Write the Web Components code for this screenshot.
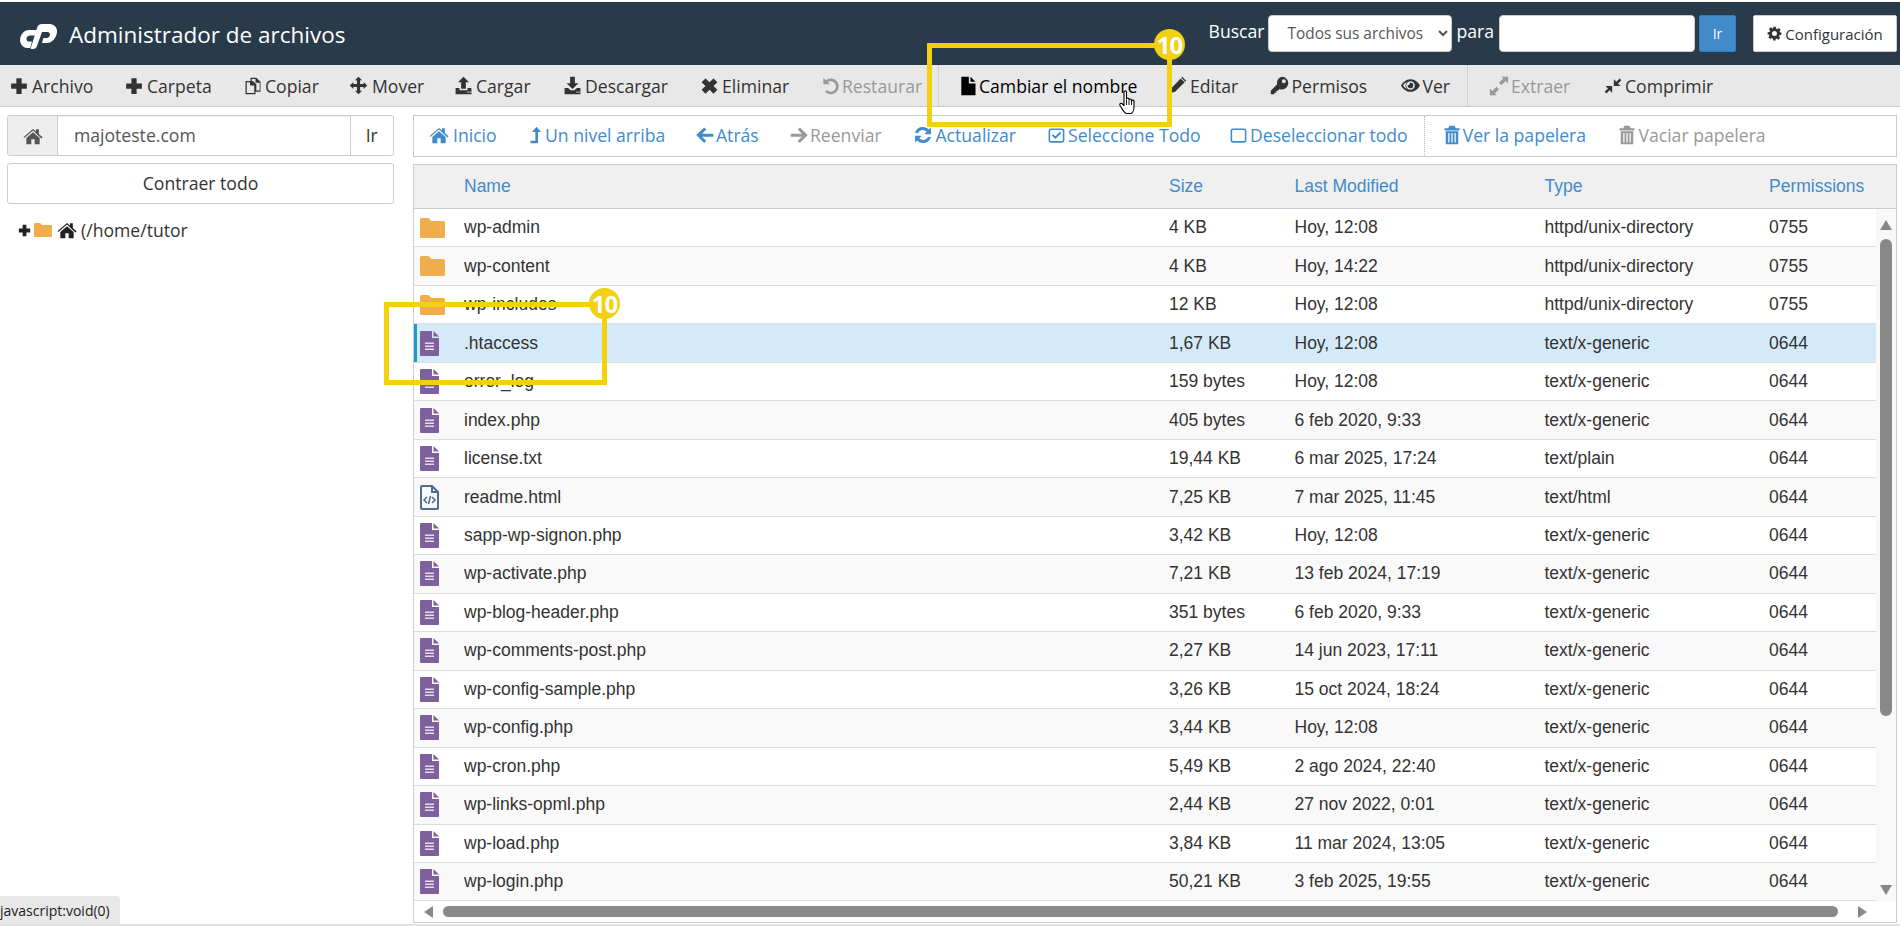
<!DOCTYPE html>
<html lang="es"><head><meta charset="utf-8"><title>Administrador de archivos</title>
<style>
html,body{margin:0;height:926px;overflow:hidden;background:#fff;font-family:"Open Sans",sans-serif;color:#333}
</style></head><body>
<fm-app></fm-app>
<script>
const P={
plus:'<path d="M8.500 1.500h7v7h7v7h-7v7h-7v-7h-7v-7h7z"/>',
copy:'<path fill-rule="evenodd" d="M9 2h7l5 5v12h-6v3H3V6h6zm1.500 1.500v2.500h1.500l4 4v7.500h4V8h-5V3.500zM4.500 7.500v13h9V11.500h-5v-4z"/>',
move:'<path d="M12 1l4.500 4.500H14V10h4.500V7.500L23 12l-4.500 4.500V14H14v4.500h2.500L12 23l-4.500-4.500H10V14H5.500v2.500L1 12l4.500-4.500V10H10V5.500H7.500z"/>',
upload:'<path fill-rule="evenodd" d="M12 1l7 7h-4v8H9V8H5zM2 15h5v3h10v-3h5v8H2zm15 4.500v1.500h1.500v-1.500zm2.500 0v1.500H21v-1.500z"/>',
download:'<path fill-rule="evenodd" d="M9 1h6v8h4.500L12 16.500 4.500 9H9zM2 15h4.500l3 3h5l3-3H22v8H2zm15 4.500v1.500h1.500v-1.500zm2.500 0v1.500H21v-1.500z"/>',
times:'<path d="M7 3l5 5 5-5 5 5-5 4.500 5 5-5 5-5-5-5 5-5-5 5-5-5-4.500z"/>',
undo:'<path d="M4 2l3 3a9.500 9.500 0 1 1-1 14l2.200-2.300A6.300 6.300 0 1 0 9.300 7.300L12 10H4z"/>',
file:'<path d="M4 1h9v8h8v14H4zM15 1l6 6h-6z"/>',
pencil:'<path d="M16 3l5 5L9 20l-6 1.500L4.500 15zM18 1l5 5-1.200 1.200-5-5z"/>',
key:'<path fill-rule="evenodd" d="M15 1a8 8 0 1 1-3 15.400L10 18.500H8v2.500H5.500V23H1v-4.500l8-8A8 8 0 0 1 15 1zm2.500 3a2.500 2.500 0 1 0 0 5 2.500 2.500 0 0 0 0-5z"/>',
eye:'<path fill-rule="evenodd" d="M12 4c6 0 10 4.500 12 8-2 3.500-6 8-12 8S2 15.500 0 12c2-3.500 6-8 12-8zM12 6.500a5.500 5.500 0 1 0 0 11 5.500 5.500 0 0 0 0-11zM2.500 12c1.400 2 3 3.500 5 4.600a6.800 6.800 0 0 1 0-9.200c-2 1.100-3.600 2.600-5 4.600zm9.500-3.500a3.500 3.500 0 1 1-3.300 2.400c.9 1 2.700.2 2.200-2.200.3-.1.700-.2 1.100-.2z"/>',
expand:'<path d="M15 1h8v8l-3-3-5 5-3-3 5-5zM9 23H1v-8l3 3 5-5 3 3-5 5z"/>',
compress:'<path d="M22 5l-4 4 3 3h-8V4l3 3 4-4zM2 19l4-4-3-3h8v8l-3-3-4 4z"/>',
home:'<path d="M12 3.500l3.500 3V4H19v5.500l4.500 3.900-1.500 1.700L12 5.500 2 14.100.5 13.400zM12 7.500l8 7V22h-6v-6h-4v6H4v-7.500z"/>',
levelup:'<path d="M14 1l6 7h-4v13a2 2 0 0 1-2 2H6v-3.500h6.500V8H8z"/>',
left:'<path d="M11 3l2.500 2.500L8.500 10.500H22V14H8.500l5 5L11 21.500 1.500 12z"/>',
right:'<path d="M13 3l-2.500 2.500 5 5H2V14h13.500l-5 5 2.500 2.500L22.500 12z"/>',
refresh:'<path d="M12 2.500c2.800 0 5.300 1.200 7 3l2.500-2.500v8h-8l3-3A6.500 6.500 0 0 0 6 9.500H2.500A9.700 9.700 0 0 1 12 2.500zM2.500 13h8l-3 3A6.500 6.500 0 0 0 18 14.500h3.500A9.700 9.700 0 0 1 5 18.500L2.500 21z"/>',
check:'<path fill-rule="evenodd" d="M5 3h14a3 3 0 0 1 3 3v12a3 3 0 0 1-3 3H5a3 3 0 0 1-3-3V6a3 3 0 0 1 3-3zm0 2a1 1 0 0 0-1 1v12a1 1 0 0 0 1 1h14a1 1 0 0 0 1-1V6a1 1 0 0 0-1-1zM10.500 16.500L6 12l1.700-1.700 2.800 2.800 5.800-5.800L18 9z"/>',
square:'<path fill-rule="evenodd" d="M5 3h14a3 3 0 0 1 3 3v12a3 3 0 0 1-3 3H5a3 3 0 0 1-3-3V6a3 3 0 0 1 3-3zm0 2a1 1 0 0 0-1 1v12a1 1 0 0 0 1 1h14a1 1 0 0 0 1-1V6a1 1 0 0 0-1-1z"/>',
trash:'<path fill-rule="evenodd" d="M9 1h6l1.500 3H21v2.500H3V4h4.500zM4.500 7.500h15V23h-15zM7.500 9.500v11.500h1.500V9.500zm3.800 0v11.500h1.500V9.500zm3.700 0v11.500h1.500V9.500z"/>',
gear:'<path fill-rule="evenodd" d="M10 1h4l.6 3.200 1.800.8 2.700-1.800 2.800 2.800-1.800 2.700.8 1.800L23 10v4l-3.100.6-.8 1.800 1.800 2.700-2.800 2.800-2.700-1.800-1.800.8L14 23h-4l-.6-3.100-1.800-.8-2.700 1.800-2.800-2.800 1.800-2.700-.8-1.800L1 14v-4l3.100-.6.8-1.800-1.800-2.700 2.800-2.800 2.700 1.800 1.800-.8zm2 7a4 4 0 1 0 0 8 4 4 0 0 0 0-8z"/>'
};
class FmIcon extends HTMLElement{
  connectedCallback(){
    if(this.shadowRoot)return;
    const s=this.getAttribute('size')||18;
    this.attachShadow({mode:'open'}).innerHTML=`<style>:host{display:inline-flex;flex:none;width:${s}px;height:${s}px}svg{width:100%;height:100%;fill:currentColor;display:block}</style><svg viewBox="0 0 24 24">${P[this.getAttribute('name')]||''}</svg>`;
  }
}
customElements.define('fm-icon',FmIcon);

class FmHeader extends HTMLElement{
  constructor(){super();this.attachShadow({mode:'open'}).innerHTML=`<style>
  :host{display:flex;align-items:center;height:63px;margin-top:2px;background:#293a4a;color:#fff;flex:none;box-sizing:border-box;padding:0 3px 0 20px;font-family:"Open Sans",sans-serif}
  svg{width:37px;height:25px;fill:#fff;display:block;flex:none;margin-top:6px}
  h1{margin:0 0 0 12px;padding-top:4px;font-size:22.500px;font-weight:400;line-height:1;flex:1}
  .lbl{font-size:17.600px;line-height:1;margin-top:-4px}
  select{width:184px;height:37px;margin:0 4px 0 4px;border:1px solid #ccc;border-radius:4px;background:#fff;color:#555;font:15.400px "Open Sans",sans-serif;padding:0 0 0 14px}
  .q{width:196px;height:37px;box-sizing:border-box;border:1px solid #ccc;border-radius:4px;background:#fff;margin-left:5px}
  .ir{width:37px;height:37px;box-sizing:border-box;margin-left:4px;background:#428bca;border:1px solid #357ebd;border-radius:2px;color:#fff;font-size:14px;display:flex;align-items:center;justify-content:center}
  .cfg{width:144px;height:37px;box-sizing:border-box;margin-left:17px;background:#fff;border:1px solid #ccc;border-radius:2px;color:#333;font-size:15px;display:flex;align-items:center;justify-content:center;gap:3px}
  </style>
  <svg viewBox="0 0 37 25"><path d="M9 6h8l-1.500 5.500H10c-1.500 0-3 1-3.400 2.700-.4 1.600.6 3.300 2.400 3.300h3L10.300 24H8C2.500 24-1 19 .4 13.500 1.500 9 5 6 9 6z"/><path d="M22 0h7c5 0 8.500 3.500 8 8-.6 6-5 11-10 11h-5l1.300-5h3c2 0 3.700-1.500 3.700-3.500 0-1.500-1-2.500-2.500-2.500h-5.500L17 22c-.5 2-2 3-4 3h-2.500L17 4c.7-2.500 2.500-4 5-4z"/></svg>
  <h1>Administrador de archivos</h1>
  <span class="lbl">Buscar</span>
  <select aria-label="Buscar"><option>Todos sus archivos</option></select>
  <span class="lbl">para</span>
  <div class="q"></div><div class="ir">Ir</div>
  <div class="cfg"><fm-icon name="gear" size="15"></fm-icon>Configuración</div>`;}
}
customElements.define('fm-header',FmHeader);

class ToolBtn extends HTMLElement{
  connectedCallback(){
    if(this.shadowRoot)return;
    const w=this.getAttribute('w'),s=this.getAttribute('sz')||20;
    this.attachShadow({mode:'open'}).innerHTML=`<style>
    :host{display:inline-flex;align-items:center;flex:none;width:${w}px;height:100%;white-space:nowrap;font-size:17.600px;color:var(--tc,#333);box-sizing:border-box;padding-bottom:var(--pb,0)}
    :host([off]){color:#999}
    fm-icon{margin-right:${this.getAttribute('ig')||2}px}
    </style><fm-icon name="${this.getAttribute('icon')}" size="${s}"></fm-icon><slot></slot>`;
  }
}
customElements.define('tool-btn',ToolBtn);

class FmToolbar extends HTMLElement{
  constructor(){super();this.attachShadow({mode:'open'}).innerHTML=`<style>
  :host{display:flex;align-items:center;height:42px;box-sizing:border-box;flex:none;background:#e8e8e8;border-bottom:1px solid #ccc;padding-left:10px;--tc:#333}
  .sep{flex:none;align-self:stretch;width:0;border-left:1px dotted #bbb}
  tool-btn[black]{color:#000}
  </style>
  <tool-btn w="115" icon="plus" sz="18" ig="4">Archivo</tool-btn>
  <tool-btn w="118" icon="plus" sz="18" ig="4">Carpeta</tool-btn>
  <tool-btn w="106" icon="copy">Copiar</tool-btn>
  <tool-btn w="105" icon="move" sz="19" ig="4">Mover</tool-btn>
  <tool-btn w="109" icon="upload" sz="19" ig="3">Cargar</tool-btn>
  <tool-btn w="137" icon="download" sz="19" ig="3">Descargar</tool-btn>
  <tool-btn w="120" icon="times" sz="19" ig="3">Eliminar</tool-btn>
  <tool-btn w="118" icon="undo" off>Restaurar</tool-btn>
  <span class="sep"></span>
  <tool-btn w="210" icon="file" ig="1" black style="margin-left:19px">Cambiar el nombre</tool-btn>
  <tool-btn w="101.500" icon="pencil" sz="19" ig="3">Editar</tool-btn>
  <tool-btn w="131" icon="key" sz="19" ig="3">Permisos</tool-btn>
  <tool-btn w="66.500" icon="eye" sz="19" ig="3">Ver</tool-btn>
  <span class="sep"></span>
  <tool-btn w="114" icon="expand" off style="margin-left:21px">Extraer</tool-btn>
  <tool-btn w="140" icon="compress">Comprimir</tool-btn>`;}
}
customElements.define('fm-toolbar',FmToolbar);

class FmSidebar extends HTMLElement{
  constructor(){super();this.attachShadow({mode:'open'}).innerHTML=`<style>
  :host{display:flex;flex-direction:column;width:387px;flex:none;margin:8px 19px 0 7px;font-size:17.600px;color:#333}
  .grp{display:flex;height:41px;box-sizing:border-box;border:1px solid #ccc;border-radius:3px;overflow:hidden}
  .add{width:49px;background:#eee;border-right:1px solid #ccc;display:flex;align-items:center;justify-content:center;color:#555}
  .inp{flex:1;display:flex;align-items:center;padding:0 0 2px 16px;color:#555;box-shadow:inset 0 1px 1px rgba(0,0,0,.075)}
  .go{width:42.500px;border-left:1px solid #ccc;display:flex;align-items:center;justify-content:center;padding-bottom:2px}
  .btn{height:41px;box-sizing:border-box;margin-top:7px;padding-bottom:2px;border:1px solid #ccc;border-radius:3px;display:flex;align-items:center;justify-content:center}
  .tree{display:flex;align-items:center;height:24px;margin-top:14px;padding-left:11px}
  .fold{width:18px;height:14px;margin:0 5px 0 4px;flex:none;fill:#f0ad4e}
  </style>
  <div class="grp"><span class="add"><fm-icon name="home" size="20"></fm-icon></span><span class="inp">majoteste.com</span><span class="go">Ir</span></div>
  <div class="btn">Contraer todo</div>
  <div class="tree"><fm-icon name="plus" size="13" style="color:#222"></fm-icon><svg class="fold" viewBox="0 0 18 14" style="margin-left:3px"><path d="M1 0h5l2 2h9a1 1 0 0 1 1 1v10a1 1 0 0 1-1 1H1a1 1 0 0 1-1-1V1a1 1 0 0 1 1-1z"/></svg><fm-icon name="home" size="20" style="color:#222;margin-right:4px"></fm-icon><span>(/home/tutor</span></div>`;}
}
customElements.define('fm-sidebar',FmSidebar);

class FmNav extends HTMLElement{
  constructor(){super();this.attachShadow({mode:'open'}).innerHTML=`<style>
  :host{display:flex;align-items:center;height:42px;box-sizing:border-box;flex:none;border:1px solid #ccc;padding-left:15px;--tc:#428bca;--pb:2px}
  .sep{flex:none;align-self:stretch;width:0;border-left:1px dotted #bbb}
  </style>
  <tool-btn w="96.500" sz="20" icon="home" ig="4">Inicio</tool-btn>
  <tool-btn w="169.500" sz="18" icon="levelup" ig="1.500">Un nivel arriba</tool-btn>
  <tool-btn w="94" sz="20" icon="left" ig="1">Atrás</tool-btn>
  <tool-btn w="123.500" sz="20" icon="right" ig="1" off>Reenviar</tool-btn>
  <tool-btn w="134.500" sz="20" icon="refresh" ig="3">Actualizar</tool-btn>
  <tool-btn w="182" sz="19" icon="check" ig="2">Seleccione Todo</tool-btn>
  <tool-btn w="194.700" sz="19" icon="square" ig="2">Deseleccionar todo</tool-btn>
  <span class="sep"></span>
  <tool-btn w="175.800" sz="20" icon="trash" ig="1" style="margin-left:17px">Ver la papelera</tool-btn>
  <tool-btn w="170" sz="20" icon="trash" ig="1" off>Vaciar papelera</tool-btn>`;}
}
customElements.define('fm-nav',FmNav);

const COLS='grid-template-columns:6px 44px 705px 125.500px 250px 224.500px 1fr';
class FileRow extends HTMLElement{
  connectedCallback(){
    if(this.shadowRoot)return;
    const a=n=>this.getAttribute(n)||'';
    const k=a('kind');
    const ic=k==='dir'?`<svg width="25" height="20" viewBox="0 0 25 20"><path fill="#f0ad4e" d="M1.500 0h7l3 3h12A1.500 1.500 0 0 1 25 4.500v14a1.500 1.500 0 0 1-1.500 1.500h-22A1.500 1.500 0 0 1 0 18.500v-17A1.500 1.500 0 0 1 1.500 0z"/></svg>`
    :k==='code'?`<svg width="19" height="25" viewBox="0 0 19 25"><path fill="none" stroke="#4f6d8f" stroke-width="2" d="M2 1h10l6 6v16a1 1 0 0 1-1 1H2a1 1 0 0 1-1-1V2a1 1 0 0 1 1-1zM12 1v6h6"/><path fill="none" stroke="#4f6d8f" stroke-width="1.500" d="M7 12l-3 3 3 3M12 12l3 3-3 3M10.500 11l-2 8"/></svg>`
    :`<svg width="19" height="25" viewBox="0 0 19 25"><path fill="#7d609c" d="M1 0h11v7h7v17a1 1 0 0 1-1 1H1a1 1 0 0 1-1-1V1a1 1 0 0 1 1-1zM13.500 0L19 5.500h-5.500z"/><path fill="#e4dcec" d="M5 11.500h9V13H5zM5 14.500h9V16H5zM5 17.500h9V19H5z"/></svg>`;
    this.attachShadow({mode:'open'}).innerHTML=`<style>
    :host{display:grid;${COLS};align-items:center;height:38.470px;box-sizing:border-box;border-bottom:1px solid #ddd;font:17.500px "Liberation Sans",Arial,sans-serif;color:#333;background:#fff;white-space:nowrap;position:relative}
    :host(:nth-child(even)){background:#f9f9f9}
    :host([sel]){background:#d5eaf8}
    :host([sel])::before{content:"";position:absolute;left:0;top:0;bottom:0;width:3px;background:#1b9ad6}
    svg{display:block}
    .ic{grid-column:2}
    </style><span class="ic">${ic}</span><span>${a('n')}</span><span>${a('s')}</span><span>${a('m')}</span><span>${a('t')}</span><span>${a('p')}</span>`;
  }
}
customElements.define('file-row',FileRow);

const ROWS=[
['dir','wp-admin','4 KB','Hoy, 12:08','httpd/unix-directory','0755'],
['dir','wp-content','4 KB','Hoy, 14:22','httpd/unix-directory','0755'],
['dir','wp-includes','12 KB','Hoy, 12:08','httpd/unix-directory','0755'],
['txt','.htaccess','1,67 KB','Hoy, 12:08','text/x-generic','0644',1],
['txt','error_log','159 bytes','Hoy, 12:08','text/x-generic','0644'],
['txt','index.php','405 bytes','6 feb 2020, 9:33','text/x-generic','0644'],
['txt','license.txt','19,44 KB','6 mar 2025, 17:24','text/plain','0644'],
['code','readme.html','7,25 KB','7 mar 2025, 11:45','text/html','0644'],
['txt','sapp-wp-signon.php','3,42 KB','Hoy, 12:08','text/x-generic','0644'],
['txt','wp-activate.php','7,21 KB','13 feb 2024, 17:19','text/x-generic','0644'],
['txt','wp-blog-header.php','351 bytes','6 feb 2020, 9:33','text/x-generic','0644'],
['txt','wp-comments-post.php','2,27 KB','14 jun 2023, 17:11','text/x-generic','0644'],
['txt','wp-config-sample.php','3,26 KB','15 oct 2024, 18:24','text/x-generic','0644'],
['txt','wp-config.php','3,44 KB','Hoy, 12:08','text/x-generic','0644'],
['txt','wp-cron.php','5,49 KB','2 ago 2024, 22:40','text/x-generic','0644'],
['txt','wp-links-opml.php','2,44 KB','27 nov 2022, 0:01','text/x-generic','0644'],
['txt','wp-load.php','3,84 KB','11 mar 2024, 13:05','text/x-generic','0644'],
['txt','wp-login.php','50,21 KB','3 feb 2025, 19:55','text/x-generic','0644']];
class FileTable extends HTMLElement{
  constructor(){super();this.attachShadow({mode:'open'}).innerHTML=`<style>
  :host{display:flex;flex-direction:column;flex:1;min-height:0;box-sizing:border-box;border:1px solid #ccc;font:17.500px "Liberation Sans",Arial,sans-serif;position:relative}
  .hd{display:grid;${COLS};align-items:center;height:44px;flex:none;box-sizing:border-box;background:#f0f0f0;border-bottom:1px solid #ccc;color:#428bca}
  .hd span:first-child{grid-column:3}
  .body{display:flex;flex:1;min-height:0}
  .rows{flex:1;min-width:0;overflow:hidden}
  .vs{width:20px;flex:none;background:#f8f8f8;display:flex;flex-direction:column;align-items:center;padding:11px 0 0}
  .up{width:0;height:0;border:6.500px solid transparent;border-top:0;border-bottom:10px solid #888}
  .dn{width:0;height:0;border:6.500px solid transparent;border-bottom:0;border-top:10px solid #888;margin-top:auto;margin-bottom:27px}
  .th{width:11.500px;height:477px;background:#888;border-radius:6px;margin-top:9px}
  .hs{position:absolute;left:0;right:0;bottom:0;height:21px;display:flex;align-items:center;background:#fff}
  .hs i{display:block;width:0;height:0;border:6.500px solid transparent}
  .l{border-left:0!important;border-right:9px solid #888!important;margin-left:10px}
  .r{border-right:0!important;border-left:9px solid #888!important;margin-left:20px}
  .ht{height:11px;border-radius:6px;background:#888;margin-left:10px;width:1395px}
  </style>
  <div class="hd"><span>Name</span><span>Size</span><span>Last Modified</span><span>Type</span><span>Permissions</span></div>
  <div class="body"><div class="rows">${ROWS.map(r=>`<file-row kind="${r[0]}" n="${r[1]}" s="${r[2]}" m="${r[3]}" t="${r[4]}" p="${r[5]}"${r[6]?' sel':''}></file-row>`).join('')}</div>
  <div class="vs"><div class="up"></div><div class="th"></div><div class="dn"></div></div></div>
  <div class="hs"><i class="l"></i><div class="ht"></div><i class="r"></i></div>`;}
}
customElements.define('file-table',FileTable);

class FmCallout extends HTMLElement{
  connectedCallback(){
    if(this.shadowRoot)return;
    const g=n=>this.getAttribute(n);
    this.attachShadow({mode:'open'}).innerHTML=`<style>
    :host{position:absolute;left:${g('x')}px;top:${g('y')}px;width:${g('w')}px;height:${g('h')}px;box-sizing:border-box;border:5px solid #f3d010;z-index:5;display:block}
    b{position:absolute;right:-18px;top:-19px;width:31px;height:31px;border-radius:50%;background:#f3d010;color:#fff;font:700 24px/31px "Open Sans",sans-serif;letter-spacing:-1px;text-align:center}
    </style><b>10</b>`;
  }
}
customElements.define('fm-callout',FmCallout);

class FmApp extends HTMLElement{
  constructor(){super();this.attachShadow({mode:'open'}).innerHTML=`<style>
  :host{display:flex;flex-direction:column;height:926px;position:relative;background:#fff;font-family:"Open Sans",sans-serif}
  .main{display:flex;flex:1;min-height:0}
  .right{flex:1;min-width:0;display:flex;flex-direction:column;gap:7px;margin:8px 3px 0 0}
  .foot{height:3px;flex:none;background:linear-gradient(#fff 1px,#e2e2e2 1px)}
  .status{position:absolute;left:0;top:896px;width:120px;height:28px;box-sizing:border-box;background:#e8e8e8;border-top-right-radius:4px;font:14px "Open Sans",sans-serif;color:#222;display:flex;align-items:center;z-index:6}
  .hand{position:absolute;left:1118px;top:90px;z-index:7;width:20px;height:25px}
  </style>
  <fm-header></fm-header><fm-toolbar></fm-toolbar>
  <div class="main"><fm-sidebar></fm-sidebar><div class="right"><fm-nav></fm-nav><file-table></file-table></div></div>
  <div class="foot"></div>
  <fm-callout x="927" y="43" w="245" h="84"></fm-callout>
  <fm-callout x="384" y="302" w="223" h="83"></fm-callout>
  <svg class="hand" viewBox="0 0 20 25"><path fill="#fff" stroke="#000" stroke-width="1.100" stroke-linejoin="round" d="M6 2c0-1.500 2.500-1.500 2.500 0v7c0-1.300 2.500-1.300 2.500 0v1c0-1.300 2.500-1.300 2.500 0v1c0-1.200 2.500-1.200 2.500 0v6c0 3-1.500 6-3 6.500H8.500C6.500 23.500 5 20 2 15.500c-1-2 1-3 2.500-1.500L6 15.500z"/><path stroke="#000" stroke-width=".9" d="M8.500 10v5M11 10.500v4.500M13.500 11v4"/></svg>
  <div class="status">javascript:void(0)</div>`;}
}
customElements.define('fm-app',FmApp);
</script>
</body></html>
